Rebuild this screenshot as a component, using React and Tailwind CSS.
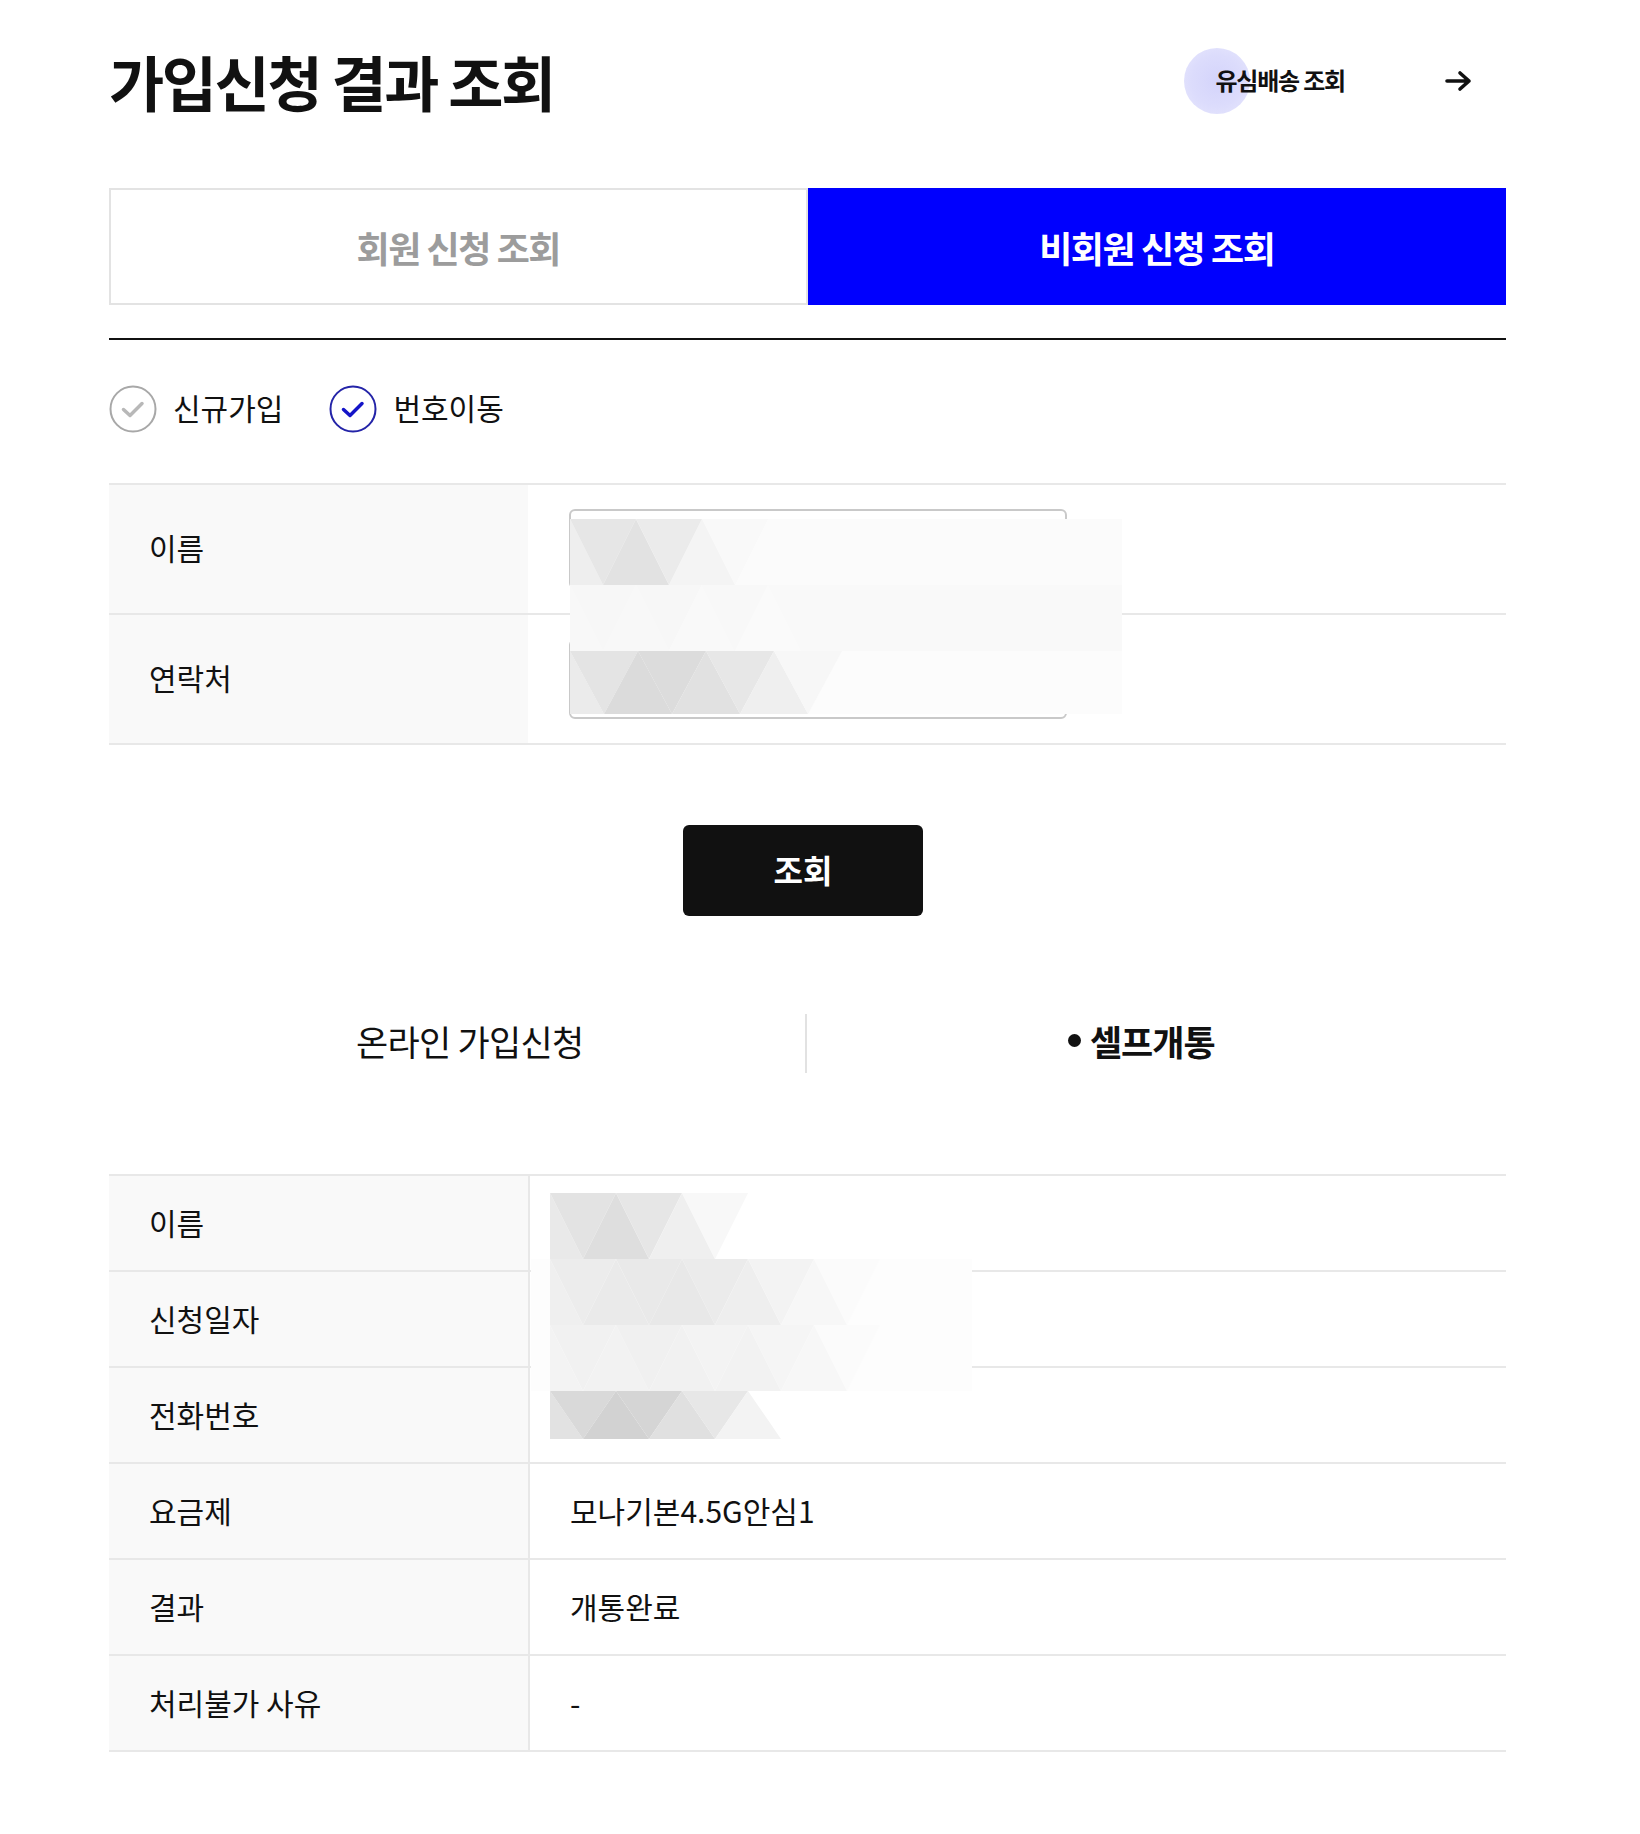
import React from "react";

const FONT = { fontFamily: '"Noto Sans CJK KR", "Noto Sans", sans-serif' };

function strip(x0, y0, h, hw, colors, keyPrefix) {
  const out = [];
  out.push(
    <polygon key={keyPrefix + "e"} points={`${x0},${y0} ${x0 + hw},${y0 + h} ${x0},${y0 + h}`} fill={colors[0]} />
  );
  for (let i = 1; i < colors.length; i++) {
    const k = i - 1;
    const n = Math.floor(k / 2);
    let pts;
    if (k % 2 === 0) {
      pts = `${x0 + 2 * n * hw},${y0} ${x0 + (2 * n + 2) * hw},${y0} ${x0 + (2 * n + 1) * hw},${y0 + h}`;
    } else {
      pts = `${x0 + (2 * n + 1) * hw},${y0 + h} ${x0 + (2 * n + 2) * hw},${y0} ${x0 + (2 * n + 3) * hw},${y0 + h}`;
    }
    out.push(<polygon key={keyPrefix + i} points={pts} fill={colors[i]} />);
  }
  return out;
}

function FormMosaic() {
  return (
    <svg className="absolute left-[461px] top-[34px]" width="552" height="195" viewBox="0 0 552 195">
      <rect x="0" y="0" width="552" height="66" fill="#fbfbfb" />
      <rect x="0" y="66" width="552" height="66" fill="#f9f9f9" />
      <rect x="0" y="132" width="552" height="63" fill="#fcfcfc" />
      {strip(0, 0, 66, 33, ["#eeeeee", "#e6e6e6", "#e2e2e2", "#ebebeb", "#f4f4f4", "#f9f9f9"], "a")}
      {strip(0, 66, 66, 33, ["#f8f8f8", "#f7f7f7", "#f8f8f8", "#f7f7f7", "#f9f9f9", "#f8f8f8", "#fafafa", "#f9f9f9"], "b")}
      {strip(0, 132, 63, 34, ["#ebebeb", "#e4e4e4", "#dbdbdb", "#dcdcdc", "#e1e1e1", "#e7e7e7", "#efefef", "#f7f7f7"], "c")}
    </svg>
  );
}

function ResultMosaic() {
  return (
    <svg className="absolute left-[422px] top-[17px]" width="441" height="247" viewBox="0 0 441 247">
      <rect x="0" y="66" width="441" height="132" fill="#fdfdfd" />
      {strip(19, 0, 66, 33, ["#e9e9e9", "#e3e3e3", "#dedede", "#e6e6e6", "#efefef", "#f8f8f8"], "a")}
      {strip(19, 66, 66, 33, ["#efefef", "#ececec", "#eaeaea", "#e9e9e9", "#e8e8e8", "#ebebeb", "#eeeeee", "#f3f3f3", "#f7f7f7", "#fbfbfb"], "b")}
      {strip(19, 132, 66, 33, ["#f3f3f3", "#f1f1f1", "#f2f2f2", "#f0f0f0", "#f1f1f1", "#f3f3f3", "#f2f2f2", "#f5f5f5", "#f7f7f7", "#fbfbfb"], "c")}
      {strip(19, 198, 48, 33, ["#e2e2e2", "#d9d9d9", "#d2d2d2", "#d5d5d5", "#e0e0e0", "#e7e7e7", "#f3f3f3"], "d")}
    </svg>
  );
}

function Radio({ checked, label }) {
  return (
    <div className="flex items-center gap-[16px]">
      <svg width="48" height="48" viewBox="0 0 48 48">
        <circle cx="24" cy="24" r="22.5" fill="white" stroke={checked ? "#2424a8" : "#a8a8a8"} strokeWidth="2" />
        <path
          d="M14.5 24.5 L21 30.5 L33 18.5"
          fill="none"
          stroke={checked ? "#1414c8" : "#b8b8b8"}
          strokeWidth="3.5"
          strokeLinecap="round"
          strokeLinejoin="round"
        />
      </svg>
      <span className="pb-[4px] text-[30px] leading-none text-[#111]">{label}</span>
    </div>
  );
}

const results = [
  ["이름", ""],
  ["신청일자", ""],
  ["전화번호", ""],
  ["요금제", "모나기본4.5G안심1"],
  ["결과", "개통완료"],
  ["처리불가 사유", "-"],
];

export default function App() {
  return (
    <div className="w-[1640px] min-h-[1834px] bg-white text-[#111]" style={FONT}>
      <div className="ml-[109px] w-[1397px] pb-[80px]">
        {/* Header */}
        <div className="mt-[46px] flex h-[70px] items-center justify-between">
          <h1 className="text-[60px] font-bold leading-none tracking-[-0.04em] text-[#111]">가입신청 결과 조회</h1>
          <div className="mr-[33px] flex items-center gap-[100px]">
            <div className="relative flex items-center">
              <span className="absolute left-[-31px] top-1/2 h-[66px] w-[66px] -translate-y-1/2 rounded-full bg-[radial-gradient(circle_at_50%_50%,#d4d4fb_0%,#dcdcfc_55%,#e8e8fd_100%)]" />
              <span className="relative pb-[3px] text-[24px] font-bold leading-none tracking-[-0.05em] text-[#111]">유심배송 조회</span>
            </div>
            <svg width="28" height="22" viewBox="0 0 28 22">
              <path d="M2 11 H24 M15 3 L24 11 L15 19" fill="none" stroke="#111" strokeWidth="3.6" strokeLinecap="round" strokeLinejoin="round" />
            </svg>
          </div>
        </div>

        {/* Tabs */}
        <div className="mt-[72px] grid h-[117px] grid-cols-2">
          <div className="flex items-center justify-center border-2 border-[#e3e3e3] bg-white">
            <span className="text-[36px] font-bold leading-none tracking-[-0.04em] text-[#9c9c9c]">회원 신청 조회</span>
          </div>
          <div className="flex items-center justify-center bg-[#0000fe]">
            <span className="text-[36px] font-bold leading-none tracking-[-0.04em] text-white">비회원 신청 조회</span>
          </div>
        </div>
        <div className="mt-[33px] h-[2px] bg-[#111]" />

        {/* Radios */}
        <div className="mt-[45px] flex items-center gap-[46px]">
          <Radio checked={false} label="신규가입" />
          <Radio checked={true} label="번호이동" />
        </div>

        {/* Form */}
        <div className="relative mt-[50px] border-t-2 border-[#e8e8e8]">
          {["이름", "연락처"].map((l) => (
            <div key={l} className="flex h-[130px] border-b-2 border-[#e8e8e8]">
              <div className="flex w-[419px] items-center bg-[#f9f9f9] pb-[4px] pl-[40px] text-[30px] leading-none">{l}</div>
              <div className="flex flex-1 items-center pl-[41px]">
                <div className="h-[80px] w-[498px] rounded-[6px] border-2 border-[#c9c9c9] bg-white" />
              </div>
            </div>
          ))}
          <FormMosaic />
        </div>

        {/* Button */}
        <div className="mt-[80px] flex justify-center pr-[9px]">
          <button className="flex h-[91px] w-[240px] items-center justify-center rounded-[6px] bg-[#111] pb-[3px] text-[32px] font-bold leading-none text-white">
            조회
          </button>
        </div>

        {/* Sub tabs */}
        <div className="mt-[98px] flex h-[59px] items-center">
          <div className="flex flex-1 justify-center pb-[6px] pl-[26px]">
            <span className="text-[35px] leading-none tracking-[-0.02em] text-[#111]">온라인 가입신청</span>
          </div>
          <div className="h-[59px] w-[2px] bg-[#e2e2e2]" />
          <div className="flex flex-1 justify-center pb-[6px] pr-[30px]">
            <span className="flex items-center gap-[9px] text-[35px] font-bold leading-none tracking-[-0.03em] text-[#111]">
              <span className="inline-block h-[13px] w-[13px] rounded-full bg-[#111]" />
              셀프개통
            </span>
          </div>
        </div>

        {/* Results */}
        <div className="relative mt-[101px] border-t-2 border-[#e8e8e8]">
          {results.map(([l, v]) => (
            <div key={l} className="flex h-[96px] border-b-2 border-[#e8e8e8]">
              <div className="flex w-[419px] items-center bg-[#f9f9f9] pb-[3px] pl-[40px] text-[30px] leading-none">{l}</div>
              <div className="w-[2px] bg-[#e8e8e8]" />
              <div className="flex flex-1 items-center pb-[3px] pl-[40px] text-[30px] leading-none">{v}</div>
            </div>
          ))}
          <ResultMosaic />
        </div>
      </div>
    </div>
  );
}
